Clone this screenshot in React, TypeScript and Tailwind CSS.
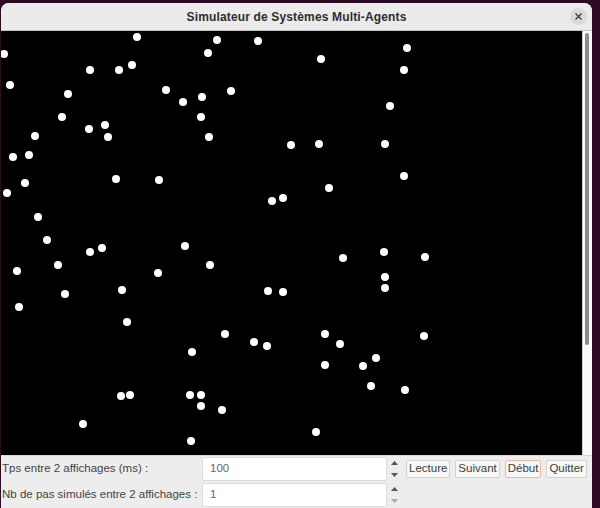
import React from 'react';

// agent positions as read in page coordinates
const agents: [number, number][] = [
  [137, 37], [217, 40], [258, 41], [407, 48], [4, 54], [208, 53], [321, 59],
  [90, 70], [119, 70], [132, 65], [404, 70], [10, 85], [166, 90], [183, 102],
  [202, 97], [231, 91], [68, 94], [390, 106], [62, 117], [201, 117], [89, 129],
  [105, 125], [108, 137], [35, 136], [209, 137], [291, 145], [319, 144],
  [385, 144], [13, 157], [29, 155], [116, 179], [159, 180], [404, 176],
  [25, 183], [7, 193], [329, 188], [272, 201], [283, 198], [38, 217],
  [47, 240], [185, 246], [102, 248], [90, 252], [384, 252], [343, 258],
  [425, 257], [17, 271], [58, 265], [158, 273], [210, 265], [385, 277],
  [385, 288], [122, 290], [268, 291], [283, 292], [65, 294], [19, 307],
  [127, 322], [225, 334], [325, 334], [424, 336], [254, 342], [267, 346],
  [340, 344], [192, 352], [376, 358], [325, 365], [363, 366], [371, 386],
  [405, 390], [121, 396], [130, 395], [190, 395], [201, 395], [201, 406],
  [222, 410], [83, 424], [316, 432], [191, 441],
];

const Spinner: React.FC<{ dim?: boolean }> = ({ dim }) => (
  <div className="w-[14px] h-[26px] flex flex-col items-center justify-between py-[5px]">
    <svg width="7" height="4" viewBox="0 0 7 4">
      <path d="M0 4 L3.5 0 L7 4 Z" fill="#555" />
    </svg>
    <svg width="7" height="4" viewBox="0 0 7 4">
      <path d="M0 0 L3.5 4 L7 0 Z" fill={dim ? '#aaa' : '#555'} />
    </svg>
  </div>
);

const Button: React.FC<{ label: string; focused?: boolean }> = ({ label, focused }) => (
  <button
    className={`h-[18px] px-[2px] bg-[#f7f7f7] rounded-[2px] border text-[11.5px] leading-none text-[#3c3c3c] ${
      focused ? 'border-[#f2b6a2]' : 'border-[#d2d2d2]'
    }`}
  >
    {label}
  </button>
);

export default function App() {
  return (
    <div
      className="w-[600px] h-[508px] bg-[#2d0a24] pt-[3px] pl-[1px] overflow-hidden"
      style={{ fontFamily: '"Liberation Sans", Arial, sans-serif' }}
    >
      <div className="w-[591px] h-[505px] flex flex-col bg-[#ededed] rounded-t-[8px] overflow-hidden">
        {/* title bar */}
        <div className="h-[28px] relative flex items-center justify-center bg-[#ebebeb] border-b border-[#c4c4c4]">
          <span className="text-[12px] font-bold text-[#2e2e2e] tracking-[0.15px]">
            Simulateur de Systèmes Multi-Agents
          </span>
          <div className="absolute right-[5px] top-[5px] w-[17px] h-[17px] rounded-full bg-[#dadada] flex items-center justify-center">
            <svg width="7" height="7" viewBox="0 0 7 7">
              <path d="M0.5 0.5 L6.5 6.5 M6.5 0.5 L0.5 6.5" stroke="#333" strokeWidth="1.2" />
            </svg>
          </div>
        </div>

        {/* canvas + scrollbar */}
        <div className="h-[424px] flex">
          <div className="flex-1 bg-black relative">
            {agents.map(([x, y], i) => (
              <div
                key={i}
                className="absolute w-[8px] h-[8px] rounded-full bg-white"
                style={{ left: x - 1 - 4, top: y - 31 - 4 }}
              />
            ))}
          </div>
          <div className="w-[10px] bg-[#f9f9f9] border-l border-[#cfcfcf] pt-[2px] pl-[2px]">
            <div className="w-[4px] h-[312px] rounded-full bg-[#8c8c8c]" />
          </div>
        </div>

        {/* controls */}
        <div className="flex-1 flex flex-col bg-[#ededed] text-[11.5px] text-[#444] border-t border-[#d8d8d8]">
          <div className="h-[26px] flex items-center">
            <span className="w-[201px] pl-[1px]">Tps entre 2 affichages (ms) :</span>
            <div className="w-[185px] h-[24px] bg-white border border-[#dcdcdc] rounded-[2px] flex items-center pl-[7px] text-[#666]">
              100
            </div>
            <Spinner />
            <div className="flex gap-[5px] ml-[5px]">
              <Button label="Lecture" />
              <Button label="Suivant" />
              <Button label="Début" focused />
              <Button label="Quitter" />
            </div>
          </div>
          <div className="h-[26px] flex items-center">
            <span className="w-[201px] pl-[1px]">Nb de pas simulés entre 2 affichages :</span>
            <div className="w-[185px] h-[24px] bg-white border border-[#dcdcdc] rounded-[2px] flex items-center pl-[7px] text-[#666]">
              1
            </div>
            <Spinner dim />
          </div>
        </div>
      </div>
    </div>
  );
}
